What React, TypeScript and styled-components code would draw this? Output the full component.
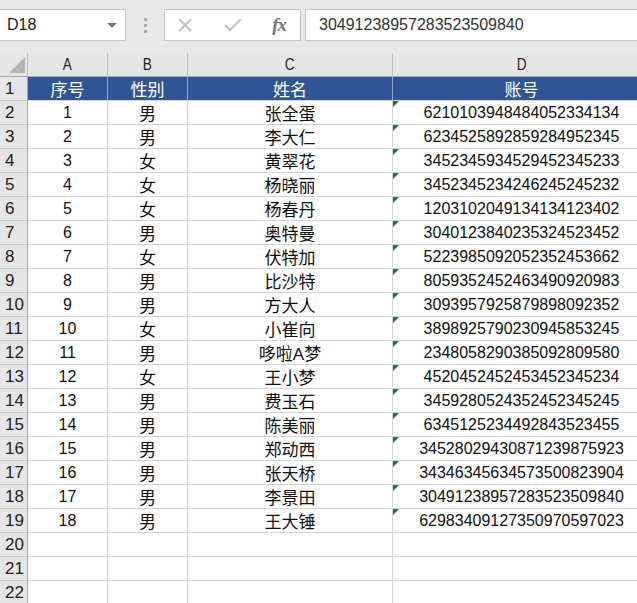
import React from "react";
import styled, { createGlobalStyle } from "styled-components";

const Global = createGlobalStyle`
  html, body { margin: 0; padding: 0; background: #ffffff; }
  body { width: 637px; height: 603px; overflow: hidden; font-family: "Liberation Sans", "Noto Sans CJK SC", sans-serif; }
`;

const Page = styled.div`
  width: 637px;
  height: 603px;
  overflow: hidden;
  background: #ffffff;
`;

const FormulaBar = styled.div`
  height: 53px;
  box-sizing: border-box;
  padding-top: 9px;
  background: #e8e8e8;
  display: flex;
  align-items: flex-start;
`;

const NameBox = styled.div`
  width: 126px;
  height: 32px;
  box-sizing: border-box;
  background: #fff;
  border: 1px solid #c6c6c6;
  border-left: none;
  display: flex;
  align-items: center;
  justify-content: space-between;
  padding: 0 8px 0 7px;
  font-size: 16px;
  color: #222;
`;

const DropArrow = styled.div`
  width: 0;
  height: 0;
  border-left: 5px solid transparent;
  border-right: 5px solid transparent;
  border-top: 5px solid #777;
`;

const Dots = styled.div`
  width: 38px;
  height: 32px;
  display: flex;
  flex-direction: column;
  align-items: center;
  justify-content: center;
  gap: 3px;
`;

const Dot = styled.span`
  width: 3px;
  height: 3px;
  background: #a8a8a8;
`;

const ActionBox = styled.div`
  width: 137px;
  height: 32px;
  box-sizing: border-box;
  background: #fff;
  border: 1px solid #c6c6c6;
  display: flex;
  align-items: center;
  padding: 0 14px 0 12px;
  justify-content: space-between;
`;

const Fx = styled.span`
  font-family: "Liberation Serif", serif;
  font-style: italic;
  font-size: 19px;
  color: #777;
  font-weight: bold;
  letter-spacing: -1px;
`;

const FormulaInput = styled.div`
  flex: 1;
  margin-left: 4px;
  height: 32px;
  box-sizing: border-box;
  background: #fff;
  border: 1px solid #c6c6c6;
  border-right: none;
  display: flex;
  align-items: center;
  padding-left: 13px;
  font-size: 16px;
  color: #333;
`;

const Sheet = styled.div`
  display: grid;
  grid-template-columns: 28px 80px 80px 205px 258px;
  grid-auto-rows: 24px;
  width: 651px;
`;

const Corner = styled.div`
  background: #e6e6e6;
  border-right: 1px solid #bdbdbd;
  border-bottom: 1px solid #a8a8a8;
  box-sizing: border-box;
  display: flex;
  align-items: flex-end;
  justify-content: flex-end;
  padding: 0 2px 3px 0;
`;

const CornerTri = styled.div`
  width: 0;
  height: 0;
  border-left: 16px solid transparent;
  border-bottom: 16px solid #b4b4b4;
`;

const ColHead = styled.div`
  background: #e6e6e6;
  border-right: 1px solid #bdbdbd;
  border-bottom: 1px solid #a8a8a8;
  box-sizing: border-box;
  display: flex;
  align-items: center;
  justify-content: center;
  font-size: 16px;
  color: #222;
`;

const ColLetter = styled.span`
  display: inline-block;
  transform: scaleX(0.85);
`;

const RowHead = styled.div`
  background: #e6e6e6;
  border-right: 1px solid #a8a8a8;
  border-bottom: 1px solid #c8c8c8;
  box-sizing: border-box;
  display: flex;
  align-items: center;
  padding-left: 5px;
  font-size: 17px;
  color: #222;
`;

const Cell = styled.div<{ $head?: boolean; $cjk?: boolean; $flag?: boolean }>`
  position: relative;
  box-sizing: border-box;
  background: ${(p) => (p.$head ? "#2f5597" : "#fff")};
  color: ${(p) => (p.$head ? "#fff" : "#111")};
  border-right: 1px solid ${(p) => (p.$head ? "#8fa9dc" : "#d4d4d4")};
  border-bottom: 1px solid #d4d4d4;
  display: flex;
  align-items: center;
  justify-content: center;
  font-size: ${(p) => (p.$cjk ? "17px" : "16px")};
  white-space: nowrap;
  overflow: visible;
  ${(p) =>
    p.$flag
      ? `&::before {
    content: "";
    position: absolute;
    left: 0;
    top: 0;
    width: 0;
    height: 0;
    border-top: 6px solid #1f7a26;
    border-right: 6px solid transparent;
  }`
      : ""}
`;

const people: [string, string, string][] = [
  ["男", "张全蛋", "6210103948484052334134"],
  ["男", "李大仁", "6234525892859284952345"],
  ["女", "黄翠花", "3452345934529452345233"],
  ["女", "杨晓丽", "3452345234246245245232"],
  ["女", "杨春丹", "1203102049134134123402"],
  ["男", "奥特曼", "3040123840235324523452"],
  ["女", "伏特加", "5223985092052352453662"],
  ["男", "比沙特", "8059352452463490920983"],
  ["男", "方大人", "3093957925879898092352"],
  ["女", "小崔向", "3898925790230945853245"],
  ["男", "哆啦A梦", "2348058290385092809580"],
  ["女", "王小梦", "4520452452453452345234"],
  ["男", "费玉石", "3459280524352452345245"],
  ["男", "陈美丽", "6345125234492843523455"],
  ["男", "郑动西", "34528029430871239875923"],
  ["男", "张天桥", "34346345634573500823904"],
  ["男", "李景田", "30491238957283523509840"],
  ["男", "王大锤", "62983409127350970597023"],
];

const XIcon = () => (
  <svg width="16" height="16" viewBox="0 0 16 16">
    <path d="M2 2 L14 14 M14 2 L2 14" stroke="#c4c4c4" strokeWidth="2" fill="none" />
  </svg>
);

const CheckIcon = () => (
  <svg width="18" height="16" viewBox="0 0 18 16">
    <path d="M1 8 L6 13 L17 2" stroke="#c4c4c4" strokeWidth="2.4" fill="none" />
  </svg>
);

export default function App() {
  return (
    <Page>
      <Global />
      <FormulaBar>
        <NameBox>
          <span>D18</span>
          <DropArrow />
        </NameBox>
        <Dots>
          <Dot />
          <Dot />
          <Dot />
        </Dots>
        <ActionBox>
          <XIcon />
          <CheckIcon />
          <Fx>fx</Fx>
        </ActionBox>
        <FormulaInput>30491238957283523509840</FormulaInput>
      </FormulaBar>
      <Sheet>
        <Corner>
          <CornerTri />
        </Corner>
        {["A", "B", "C", "D"].map((c) => (
          <ColHead key={c}>
            <ColLetter>{c}</ColLetter>
          </ColHead>
        ))}
        <RowHead>1</RowHead>
        <Cell $head $cjk>序号</Cell>
        <Cell $head $cjk>性别</Cell>
        <Cell $head $cjk>姓名</Cell>
        <Cell $head $cjk>账号</Cell>
        {people.map(([g, n, acc], i) => (
          <React.Fragment key={i}>
            <RowHead>{i + 2}</RowHead>
            <Cell>{i + 1}</Cell>
            <Cell $cjk>{g}</Cell>
            <Cell $cjk>{n}</Cell>
            <Cell $flag>{acc}</Cell>
          </React.Fragment>
        ))}
        {[20, 21, 22].map((r) => (
          <React.Fragment key={r}>
            <RowHead>{r}</RowHead>
            <Cell />
            <Cell />
            <Cell />
            <Cell />
          </React.Fragment>
        ))}
      </Sheet>
    </Page>
  );
}
